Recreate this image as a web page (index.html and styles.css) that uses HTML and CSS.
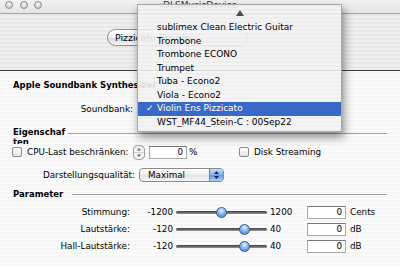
FILE: index.html
```html
<!DOCTYPE html>
<html lang="de">
<head>
    <meta charset="UTF-8">
    <meta name="viewport" content="width=device-width, initial-scale=1.0">
    <title>DLSMusicDevice</title>
    <link rel="stylesheet" href="styles.css">
</head>
<body>
<div class="window">
    <div class="titlebar">
        <div class="lights"><span></span><span></span><span></span></div>
        <div class="title">DLSMusicDevice</div>
    </div>

    <div class="toolbar">
        <div class="preset-btn">Pizzicato Strings</div>
    </div>

    <div class="content">
        <div class="synth-name">Apple Soundbank Synthesizer</div>

        <div class="row bank-row">
            <span class="label bank-label">Soundbank:</span>
        </div>

        <div class="group-head props-head">
            <h4>Eigenschaften</h4>
            <div class="rule"></div>
        </div>

        <div class="row cpu-row">
            <span class="check"></span>
            <span class="check-text cpu-text">CPU-Last beschränken:</span>
            <svg class="stepper" width="12" height="15" viewBox="0 0 12 15">
                <rect x="0.5" y="0.5" width="11" height="14" rx="4" fill="#f4f4f4" stroke="#9a9a9a"/>
                <line x1="1" y1="7.5" x2="11" y2="7.5" stroke="#d0d0d0"/>
                <path d="M6 3 L8 5.5 L4 5.5 Z" fill="#666"/>
                <path d="M6 12 L8 9.5 L4 9.5 Z" fill="#666"/>
            </svg>
            <span class="field pct-field">0</span>
            <span class="unit pct-unit">%</span>
            <span class="check"></span>
            <span class="check-text">Disk Streaming</span>
        </div>

        <div class="row quality-row">
            <span class="label quality-label">Darstellungsqualität:</span>
            <div class="popup">
                <span class="popup-text">Maximal</span>
                <span class="popup-arrows">
                    <svg width="7" height="10" viewBox="0 0 7 10">
                        <path d="M3.5 1 L6 4 L1 4 Z" fill="#1d2a40"/>
                        <path d="M3.5 9 L6 6 L1 6 Z" fill="#1d2a40"/>
                    </svg>
                </span>
            </div>
        </div>

        <div class="group-head param-head">
            <h4>Parameter</h4>
            <div class="rule"></div>
        </div>

        <div class="param">
            <span class="param-name">Stimmung:</span>
            <span class="min">-1200</span>
            <div class="slider"><span class="knob" style="left: 50%"></span></div>
            <span class="max">1200</span>
            <span class="field">0</span>
            <span class="unit">Cents</span>
        </div>
        <div class="param">
            <span class="param-name">Lautstärke:</span>
            <span class="min">-120</span>
            <div class="slider"><span class="knob" style="left: 75%"></span></div>
            <span class="max">40</span>
            <span class="field">0</span>
            <span class="unit">dB</span>
        </div>
        <div class="param">
            <span class="param-name">Hall-Lautstärke:</span>
            <span class="min">-120</span>
            <div class="slider"><span class="knob" style="left: 75%"></span></div>
            <span class="max">40</span>
            <span class="field">0</span>
            <span class="unit">dB</span>
        </div>
    </div>

    <!-- open soundbank popup menu -->
    <div class="menu">
        <div class="menu-up">
            <svg width="8" height="6" viewBox="0 0 8 6"><path d="M4 0 L8 6 L0 6 Z" fill="#4a4a4a"/></svg>
        </div>
        <ul class="menu-items">
            <li>sublimex Clean Electric Guitar</li>
            <li>Trombone</li>
            <li>Trombone ECONO</li>
            <li>Trumpet</li>
            <li>Tuba - Econo2</li>
            <li>Viola - Econo2</li>
            <li class="selected"><span class="tick">✓</span>Violin Ens Pizzicato</li>
            <li>WST_MF44_Stein-C : 00Sep22</li>
        </ul>
    </div>
</div>
</body>
</html>
```

FILE: styles.css
```css
body {
  margin: 0;
  font-family: "DejaVu Sans", sans-serif;
  font-size: 8.8px;
  color: #000;
  background: #f7f7f7;
}

.window {
  position: relative;
  width: 400px;
  height: 266px;
  overflow: hidden;
  background: repeating-linear-gradient(#f6f6f6 0 2px, #fbfbfb 2px 4px);
}

/* title bar */
.titlebar {
  height: 13px;
  border-bottom: 1px solid #a3a3a3;
  display: grid;
  grid-template-columns: 50px 1fr 50px;
  align-items: center;
  background: linear-gradient(#f2f2f2, #e4e4e4);
}

.lights {
  display: flex;
  gap: 6.5px;
  padding-left: 5px;
  margin-top: -3px;
}

.lights span {
  width: 8px;
  height: 8px;
  border-radius: 50%;
  box-sizing: border-box;
  border: 1px solid #8c8c8c;
  background: radial-gradient(circle at 50% 35%, #fafafa, #cfcfcf 70%, #b8b8b8);
}

.title {
  text-align: center;
  font-size: 9px;
  color: #333;
  margin-top: -3px;
}

/* toolbar */
.toolbar {
  height: 57px;
  border-bottom: 1px solid #3d3d3d;
  background: repeating-linear-gradient(#e7e7e7 0 2px, #efefef 2px 4px);
  padding-top: 15px;
  box-sizing: border-box;
}

.preset-btn {
  margin-left: 107px;
  width: 141px;
  height: 17px;
  box-sizing: border-box;
  border: 1px solid #8d8d8d;
  border-radius: 9px;
  background: linear-gradient(#ffffff, #ececec 50%, #dcdcdc 51%, #f4f4f4);
  padding-left: 7px;
  line-height: 15px;
  font-size: 9.4px;
}

/* content */
.synth-name {
  height: 28px;
  line-height: 28px;
  padding-left: 13px;
  font-weight: bold;
  font-size: 8.5px;
}

.row {
  display: flex;
  align-items: center;
}

.label {
  text-align: right;
  flex-shrink: 0;
}

.bank-row {
  height: 19px;
}

.bank-label {
  width: 133px;
}

.group-head {
  display: flex;
  padding-right: 13px;
}

.group-head h4 {
  margin: 0 0 0 13px;
  font-size: 8.5px;
  flex-shrink: 0;
}

.group-head .rule {
  flex: 1;
  border-top: 1px solid #a0a0a0;
}

.props-head {
  height: 26px;
  padding-top: 9px;
  box-sizing: border-box;
  align-items: flex-start;
}

.props-head h4 {
  width: 55px;
  line-height: 10px;
  height: 17px;
  overflow: hidden;
  word-break: break-all;
}

.props-head .rule {
  margin-top: 6px;
}

.cpu-row {
  height: 16px;
}

.check {
  width: 10px;
  height: 10px;
  box-sizing: border-box;
  border: 1px solid #8a8a8a;
  border-radius: 2px;
  background: linear-gradient(#ffffff, #e4e4e4);
  flex-shrink: 0;
}

.cpu-row .check:first-child {
  margin-left: 12px;
}

.check-text {
  margin-left: 5px;
}

.cpu-text {
  width: 106px;
}

.stepper {
  flex-shrink: 0;
}

.field {
  width: 39px;
  height: 13px;
  box-sizing: border-box;
  border: 1px solid #a8a8a8;
  border-top-color: #7a7a7a;
  background: #fff;
  text-align: right;
  padding-right: 3px;
  line-height: 11px;
  flex-shrink: 0;
}

.pct-field {
  width: 38px;
  margin-left: 4px;
}

.unit {
  margin-left: 4px;
}

.pct-unit {
  margin-left: 2px;
  width: 50px;
}

.quality-row {
  margin-top: 6px;
  height: 17px;
}

.quality-label {
  width: 135px;
}

.popup {
  margin-left: 4px;
  width: 85px;
  height: 14px;
  box-sizing: border-box;
  border: 1px solid #8a8a8a;
  border-radius: 4px;
  display: flex;
  background: linear-gradient(#ffffff, #eeeeee 50%, #e2e2e2 51%, #f6f6f6);
  overflow: hidden;
}

.popup-text {
  flex: 1;
  padding-left: 8px;
  line-height: 12px;
}

.popup-arrows {
  width: 13px;
  display: flex;
  align-items: center;
  justify-content: center;
  border-left: 1px solid #5f84bb;
  background: linear-gradient(#c9defb, #7fb0ee 50%, #5d98e6 51%, #a7cdfa);
}

.param-head {
  margin-top: 4px;
  height: 14px;
  align-items: center;
}

.param-head h4 {
  width: 59px;
}

.param {
  display: flex;
  align-items: center;
  height: 17px;
}

.param-head + .param {
  margin-top: 2.5px;
}

.param-name {
  width: 130px;
  text-align: right;
  flex-shrink: 0;
}

.min {
  width: 43px;
  text-align: right;
  flex-shrink: 0;
}

.slider {
  position: relative;
  width: 91px;
  height: 17px;
  margin-left: 3px;
  flex-shrink: 0;
}

.slider::before {
  content: "";
  position: absolute;
  left: 0;
  right: 0;
  top: 7px;
  height: 3px;
  border-radius: 2px;
  background: linear-gradient(#3f3f3f, #777 70%, #9a9a9a);
}

.knob {
  position: absolute;
  top: 3px;
  width: 11px;
  height: 11px;
  margin-left: -5.5px;
  box-sizing: border-box;
  border-radius: 50%;
  border: 1px solid #36598f;
  background: radial-gradient(circle at 50% 30%, #e4f0ff, #7eb0ee 50%, #3f78cc);
}

.max {
  margin-left: 3px;
  width: 37px;
  flex-shrink: 0;
}

/* open popup menu */
.menu {
  position: absolute;
  left: 137px;
  top: 4px;
  width: 205px;
  height: 128px;
  box-sizing: border-box;
  border: 1px solid #a9a9a9;
  background: repeating-linear-gradient(rgba(238, 238, 238, 0.9) 0 2px, rgba(244, 244, 244, 0.9) 2px 4px);
  box-shadow: 2px 5px 9px rgba(0, 0, 0, 0.45);
}

.menu-up {
  height: 16px;
  display: flex;
  align-items: center;
  justify-content: center;
}

.menu-items {
  list-style: none;
  margin: 0;
  padding: 0;
  font-size: 9px;
}

.menu-items li {
  height: 13.5px;
  line-height: 13.5px;
  padding-left: 19px;
  white-space: nowrap;
}

.menu-items li.selected {
  background: #3869c6;
  color: #fff;
}

.tick {
  display: inline-block;
  width: 11px;
  margin-left: -11px;
}
```
